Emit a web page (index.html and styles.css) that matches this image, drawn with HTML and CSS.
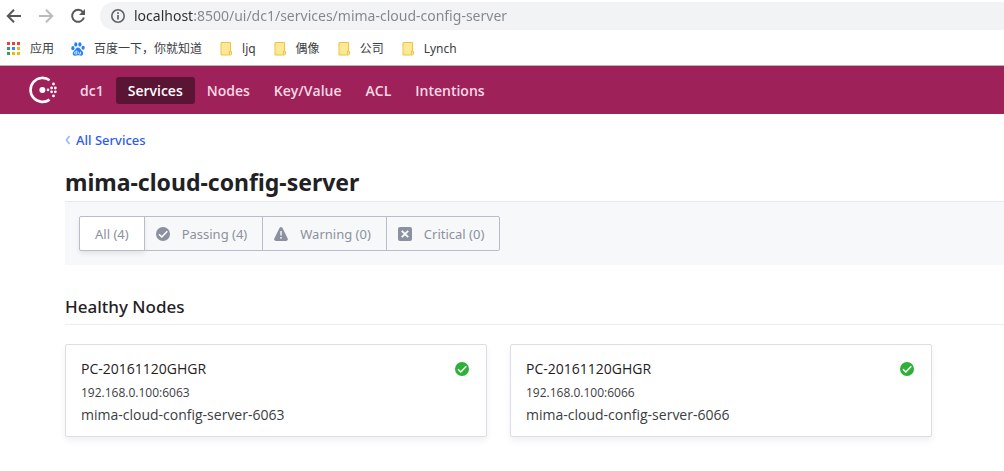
FILE: index.html
```html
<!DOCTYPE html>
<html lang="en">
<head>
<meta charset="utf-8">
<meta name="viewport" content="width=device-width, initial-scale=1">
<title>mima-cloud-config-server - Consul</title>
<link rel="stylesheet" href="styles.css">
</head>
<body>
<svg class="defs" aria-hidden="true">
  <symbol id="folder" viewBox="0 0 13 15">
    <path d="M1 1.5H10.5V10.5H11.5V13L10.5 14H1z" fill="#ffe794" stroke="#e9c34a"/>
    <path d="M9.5 10V13.5" stroke="#e9c34a" fill="none"/>
  </symbol>
  <symbol id="check" viewBox="0 0 14 14">
    <circle cx="7" cy="7" r="7" fill="currentColor"/>
    <path d="M3 7.2L5.8 10L11.3 4.3" fill="none" stroke="#fff" stroke-width="1.5"/>
  </symbol>
</svg>

<div class="browser">
  <div class="toolbar">
    <button class="tool" aria-label="Back"><svg width="16" height="16" viewBox="0 0 16 16"><path d="M15 8H2M8 1.8L1.8 8L8 14.2"/></svg></button>
    <button class="tool" aria-label="Forward" disabled><svg width="16" height="16" viewBox="0 0 16 16"><path d="M1 8H14M8 1.8L14.2 8L8 14.2"/></svg></button>
    <button class="tool" aria-label="Reload"><svg width="16" height="16" viewBox="0 0 16 16"><path d="M13 4.3A6 6 0 1 0 13.9 9.5"/><path class="solid" d="M15 1V7H9z"/></svg></button>
    <div class="omnibox">
      <svg width="14" height="14" viewBox="0 0 14 14" aria-hidden="true"><circle cx="7" cy="7" r="6.2" fill="none" stroke="#5f6368" stroke-width="1.6"/><path d="M7 6V10.5M7 3.3V5" stroke="#5f6368" stroke-width="1.7"/></svg>
      <input class="url" type="text" aria-label="Address" value="localhost:8500/ui/dc1/services/mima-cloud-config-server">
    </div>
  </div>
  <nav class="bookmarks" aria-label="Bookmarks">
    <a class="apps" href="#"><svg width="13" height="13" viewBox="0 0 13 13" aria-hidden="true"><path d="M0 0h3v3H0zM5 0h3v3H5zM10 0h3v3h-3z" fill="#ea4335"/><path d="M0 5h3v3H0zM0 10h3v3H0z" fill="#34a050"/><path d="M5 5h3v3H5z" fill="#2b8cff"/><path d="M10 5h3v3h-3zM5 10h3v3H5zM10 10h3v3h-3z" fill="#fbb40a"/></svg>应用</a>
    <a href="#"><svg width="14" height="14" viewBox="0 0 14 14" aria-hidden="true"><g fill="#2580f7"><ellipse cx="1.9" cy="6.2" rx="1.6" ry="2.1"/><ellipse cx="4.8" cy="2.4" rx="1.6" ry="2.2"/><ellipse cx="8.9" cy="2.4" rx="1.6" ry="2.2"/><ellipse cx="12.1" cy="5.8" rx="1.6" ry="2"/><path d="M7 5.6C9 5.6 9.4 7.7 11 9C12.8 10.4 12.6 13.7 10 13.7C8.4 13.7 8.2 13.3 7 13.3S5.4 13.8 3.9 13.7C1.4 13.6 1 10.6 3 9C4.7 7.7 5 5.6 7 5.6z"/></g><path d="M5.8 8.5V12H4.6A1.1 1.1 0 0 1 4.6 9.8H5.8M7.6 9.8V11.2Q7.6 12 8.4 12H9.6V9.8" fill="none" stroke="#fff" stroke-width=".8"/></svg>百度一下，你就知道</a>
    <a href="#"><svg width="13" height="15" aria-hidden="true"><use href="#folder"/></svg>ljq</a>
    <a href="#"><svg width="13" height="15" aria-hidden="true"><use href="#folder"/></svg>偶像</a>
    <a href="#"><svg width="13" height="15" aria-hidden="true"><use href="#folder"/></svg>公司</a>
    <a href="#"><svg width="13" height="15" aria-hidden="true"><use href="#folder"/></svg>Lynch</a>
  </nav>
</div>

<header class="header">
  <a class="logo" href="#" aria-label="Consul"><svg width="28" height="28" viewBox="0 0 28 28"><path d="M20.6 4.2A12 12 0 1 0 20.6 23.6" fill="none" stroke="#fff" stroke-width="2.6"/><g fill="#fff"><circle cx="13.4" cy="13.9" r="3"/><circle cx="19" cy="13.9" r="1.3"/><circle cx="22.6" cy="12" r="1.4"/><circle cx="22.6" cy="15.8" r="1.4"/><circle cx="26.3" cy="12" r="1.4"/><circle cx="26.3" cy="15.8" r="1.4"/><circle cx="24.5" cy="8" r="1.4"/><circle cx="24.5" cy="19.9" r="1.4"/></g></svg></a>
  <nav class="menu" aria-label="Main">
    <a href="#">dc1</a>
    <a class="active" href="#" aria-current="page">Services</a>
    <a href="#">Nodes</a>
    <a href="#">Key/Value</a>
    <a href="#">ACL</a>
    <a href="#">Intentions</a>
  </nav>
</header>

<main class="main">
  <a class="back" href="#"><svg width="6" height="10" viewBox="0 0 6 10" aria-hidden="true"><path d="M4.5 1L1.5 5L4.5 9" fill="none" stroke="#9dbcfb" stroke-width="1.8"/></svg>All Services</a>
  <h1 class="title">mima-cloud-config-server</h1>
  <div class="filterbar">
    <div class="filters">
      <button class="filter selected" aria-pressed="true">All (4)</button>
      <button class="filter"><svg width="14" height="14" aria-hidden="true"><use href="#check"/></svg>Passing (4)</button>
      <button class="filter"><svg width="14" height="14" viewBox="0 0 14 14" aria-hidden="true"><path d="M5.5 1Q7-.8 8.5 1L13.7 11.5Q14.2 14 12 14H2Q-.2 14 .3 11.5z" fill="currentColor"/><path d="M7 4V8.6M7 10V11.8" stroke="#dfe2e8" stroke-width="1.8"/></svg>Warning (0)</button>
      <button class="filter"><svg width="14" height="14" viewBox="0 0 14 14" aria-hidden="true"><rect width="14" height="14" rx="2" fill="currentColor"/><path d="M3.8 3.8L10.2 10.2M10.2 3.8L3.8 10.2" stroke="#fff" stroke-width="1.8"/></svg>Critical (0)</button>
    </div>
  </div>
  <section>
    <h2 class="subtitle">Healthy Nodes</h2>
    <div class="cards">
      <article class="card">
        <div class="cardhead"><h3>PC-20161120GHGR</h3><svg width="14" height="14" role="img" aria-label="Passing"><use href="#check"/></svg></div>
        <p class="address">192.168.0.100:6063</p>
        <p class="service">mima-cloud-config-server-6063</p>
      </article>
      <article class="card">
        <div class="cardhead"><h3>PC-20161120GHGR</h3><svg width="14" height="14" role="img" aria-label="Passing"><use href="#check"/></svg></div>
        <p class="address">192.168.0.100:6066</p>
        <p class="service">mima-cloud-config-server-6066</p>
      </article>
    </div>
  </section>
</main>
</body>
</html>
```

FILE: styles.css
```css
* { box-sizing: border-box; }
body {
  margin: 0;
  background: #fff;
  color: #1f2124;
  font: 13px/20px "Noto Sans", "Noto Sans CJK SC", sans-serif;
}
h1, h2, h3, p { margin: 0; }
a { color: inherit; text-decoration: none; }
button { font: inherit; cursor: pointer; }
svg { flex: none; }
.defs { display: none; }

.browser { border-bottom: 1px solid #b5b5b8; }
.toolbar {
  display: flex;
  align-items: center;
  height: 32px;
  padding-left: 6px;
}
.tool {
  display: flex;
  width: 32px;
  padding: 0;
  border: 0;
  background: none;
}
.tool path { fill: none; stroke: #55585d; stroke-width: 2; }
.tool .solid { fill: #55585d; stroke: none; }
.tool:disabled path { stroke: #bbb; }
.omnibox {
  display: flex;
  flex: 1;
  align-items: center;
  gap: 9px;
  height: 28px;
  padding-left: 11px;
  margin-left: -2px;
  border-radius: 14px 0 0 14px;
  background: #f1f3f4;
}
.url {
  flex: 1;
  min-width: 0;
  height: 24px;
  padding: 0;
  border: 0;
  outline: 0;
  background: linear-gradient(90deg, #2b2d30 60px, #80868b 60px);
  -webkit-background-clip: text;
  background-clip: text;
  color: transparent;
  font: 14px/24px "Noto Sans", sans-serif;
}
.bookmarks {
  display: flex;
  align-items: center;
  gap: 18px;
  height: 33px;
  padding-left: 7px;
  color: #3c4043;
  font-size: 12px;
}
.bookmarks a { display: flex; align-items: center; gap: 9px; }
.bookmarks .apps { gap: 10px; margin-right: -1px; }

.header {
  display: flex;
  align-items: center;
  gap: 11px;
  height: 48px;
  padding-left: 29px;
  background: #9e2159;
  color: #f9d9e5;
}
.logo { display: flex; }
.menu { display: flex; font-family: "Open Sans", sans-serif; font-size: 14px; font-weight: 600; }
.menu a { padding: 4px 12px; border-radius: 3px; line-height: 19px; }
.menu .active { background: #5a1434; color: #fff; }

.main { padding-left: 65px; }
.back {
  display: flex;
  align-items: center;
  gap: 5px;
  width: max-content;
  padding-top: 16px;
  color: #2d5bef;
  font-weight: 500;
}
.title {
  padding: 16px 0 2px;
  font-size: 23px;
  line-height: 33px;
}
.filterbar {
  padding: 14px;
  border-top: 1px solid #e6e9ef;
  background: #f7f8fa;
}
.filters { display: flex; }
.filter {
  display: flex;
  align-items: center;
  gap: 12px;
  height: 35px;
  padding: 0 15px 0 11px;
  margin-left: -1px;
  border: 1px solid #b8bccb;
  background: none;
  color: #8b919e;
}
.filter:first-child {
  padding: 0 15px;
  margin-left: 0;
  border-radius: 2px 0 0 2px;
}
.filter:last-child { border-radius: 0 2px 2px 0; }
.selected { background: #fff; box-shadow: 0 3px 5px rgba(0, 0, 0, .08); }
.subtitle {
  padding: 29px 0 5px;
  border-bottom: 1px solid #ebecf2;
  font-size: 17px;
  font-weight: 500;
  line-height: 25px;
}
.cards {
  display: grid;
  grid-template-columns: 1fr 1fr;
  gap: 23px;
  padding: 19px 72px 16px 0;
}
.card {
  padding: 13px 17px 11px 15px;
  border: 1px solid #dcdde6;
  border-radius: 2px;
  box-shadow: 0 4px 6px rgba(0, 0, 0, .06);
  font-family: "Open Sans", sans-serif;
}
.cardhead {
  display: flex;
  align-items: center;
  justify-content: space-between;
  height: 22px;
  color: #2eb039;
}
.cardhead h3 { color: #1f2124; font-size: 14px; font-weight: 500; line-height: 20px; }
.address { padding-top: 3px; font-size: 12px; color: #3b3d42; }
.service { padding-top: 2px; font-size: 14px; color: #3b3d42; }
```
